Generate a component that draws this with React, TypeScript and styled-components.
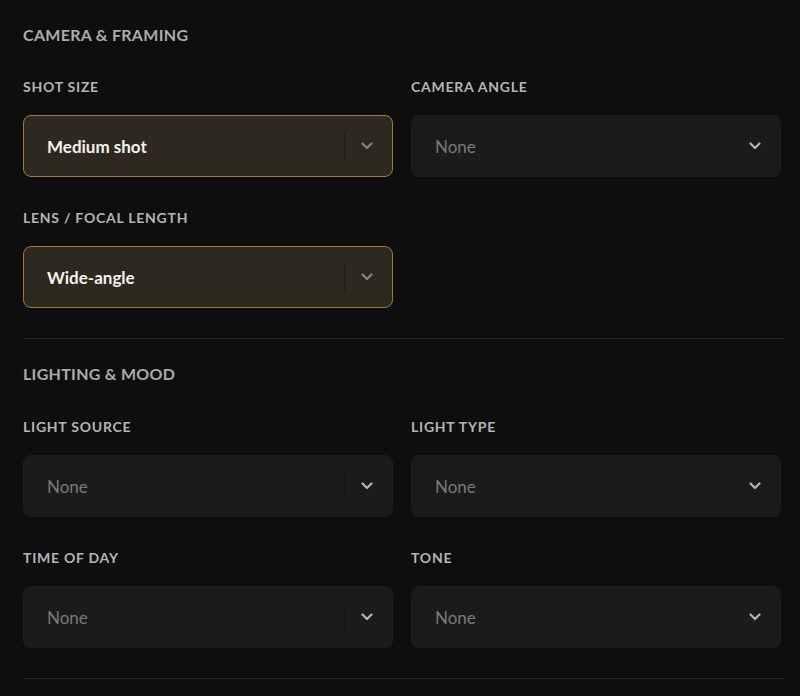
import React from 'react';
import styled, { createGlobalStyle } from 'styled-components';

const GlobalStyle = createGlobalStyle`
  html, body {
    margin: 0;
    padding: 0;
    background: #0e0e0e;
  }
  body {
    font-family: 'Lato', 'Noto Sans', sans-serif;
    -webkit-font-smoothing: antialiased;
  }
`;

type Field = {
  label: string;
  value?: string;
  divider?: boolean;
};

type Section = {
  title: string;
  fields: (Field | null)[];
};

const sections: Section[] = [
  {
    title: 'Camera & Framing',
    fields: [
      { label: 'Shot size', value: 'Medium shot', divider: true },
      { label: 'Camera angle' },
      { label: 'Lens / Focal length', value: 'Wide-angle', divider: true },
      null,
    ],
  },
  {
    title: 'Lighting & Mood',
    fields: [
      { label: 'Light source', divider: true },
      { label: 'Light type' },
      { label: 'Time of day', divider: true },
      { label: 'Tone' },
    ],
  },
];

const Chevron = () => (
  <svg width="12" height="8" viewBox="0 0 12 8" fill="none">
    <polyline
      points="1.5,1.5 6,6 10.5,1.5"
      stroke="currentColor"
      strokeWidth="2.2"
      strokeLinecap="round"
      strokeLinejoin="round"
    />
  </svg>
);

const App = () => {
  return (
    <>
      <GlobalStyle />
      <Panel>
        {sections.map((section) => (
          <Group key={section.title}>
            <GroupTitle>{section.title}</GroupTitle>
            <FieldGrid>
              {section.fields.map((field, i) =>
                field ? (
                  <FieldBox key={field.label}>
                    <Label>{field.label}</Label>
                    <Select $active={!!field.value}>
                      <Value $active={!!field.value}>{field.value ?? 'None'}</Value>
                      <Indicator $active={!!field.value}>
                        <Separator $active={!!field.value} $visible={!!field.divider} />
                        <Chevron />
                      </Indicator>
                    </Select>
                  </FieldBox>
                ) : (
                  <div key={i} />
                )
              )}
            </FieldGrid>
          </Group>
        ))}
      </Panel>
    </>
  );
};

const Panel = styled.div`
  display: flex;
  flex-direction: column;
  width: 760px;
  padding-left: 23px;
`;

const Group = styled.section`
  display: flex;
  flex-direction: column;
  gap: 33px;
  padding: 25px 0 30px;
  border-bottom: 1px solid #262626;

  & + & {
    gap: 34px;
    padding-bottom: 30px;
  }
`;

const GroupTitle = styled.h2`
  margin: 0;
  font-size: 16px;
  line-height: 20px;
  font-weight: 700;
  letter-spacing: 0.3px;
  text-transform: uppercase;
  color: #ababab;
`;

const FieldGrid = styled.div`
  display: grid;
  grid-template-columns: repeat(2, 370px);
  column-gap: 18px;
  row-gap: 32px;
`;

const FieldBox = styled.div`
  display: flex;
  flex-direction: column;
  gap: 19px;
`;

const Label = styled.div`
  font-size: 14px;
  line-height: 18px;
  font-weight: 700;
  letter-spacing: 0.75px;
  text-transform: uppercase;
  color: #b5b5b5;
`;

const Select = styled.div<{ $active: boolean }>`
  box-sizing: border-box;
  display: flex;
  align-items: center;
  height: 62px;
  padding: 0 19px 0 23px;
  border-radius: 8px;
  border: 1px solid ${(p) => (p.$active ? '#9b7d36' : '#1c1c1c')};
  background: ${(p) => (p.$active ? '#2d2920' : '#1b1b1b')};
`;

const Value = styled.span<{ $active: boolean }>`
  flex: 1;
  font-size: 17px;
  font-weight: ${(p) => (p.$active ? 700 : 400)};
  color: ${(p) => (p.$active ? '#f4f2ec' : '#7a7a7a')};
`;

const Indicator = styled.div<{ $active: boolean }>`
  display: flex;
  align-items: center;
  gap: 16px;
  color: ${(p) => (p.$active ? '#8b8470' : '#b4b4b4')};
`;

const Separator = styled.span<{ $active: boolean; $visible: boolean }>`
  width: 1px;
  height: 28px;
  background: ${(p) => (!p.$visible ? 'transparent' : p.$active ? '#1f1c15' : '#151515')};
`;

export default App;
